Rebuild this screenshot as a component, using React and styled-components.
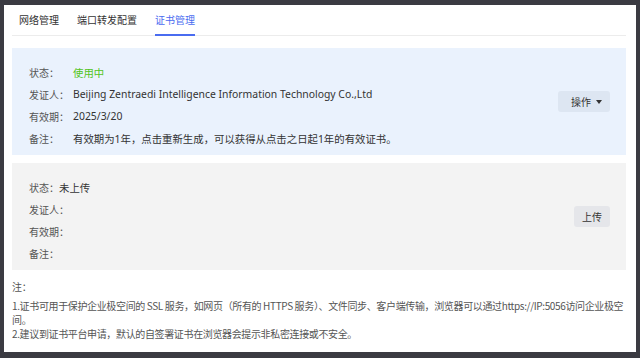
import React from 'react';
import styled, { createGlobalStyle } from 'styled-components';

const GlobalStyle = createGlobalStyle`
  html, body {
    margin: 0;
    padding: 0;
    background: #3b3b42;
  }
  body {
    font-family: "Noto Sans", "Noto Sans CJK SC", sans-serif;
  }
`;

const tabs = ['网络管理', '端口转发配置', '证书管理'];

const certs = [
  {
    tone: 'blue',
    action: '操作',
    dropdown: true,
    inline: false,
    rows: [
      { label: '状态：', value: '使用中', ok: true },
      { label: '发证人：', value: 'Beijing Zentraedi Intelligence Information Technology Co.,Ltd' },
      { label: '有效期：', value: '2025/3/20' },
      { label: '备注：', value: '有效期为1年，点击重新生成，可以获得从点击之日起1年的有效证书。' },
    ],
  },
  {
    tone: 'gray',
    action: '上传',
    dropdown: false,
    inline: true,
    rows: [
      { label: '状态：', value: '未上传' },
      { label: '发证人：', value: '' },
      { label: '有效期：', value: '' },
      { label: '备注：', value: '' },
    ],
  },
];

function Caret() {
  return (
    <svg width="6" height="4" viewBox="0 0 6 4">
      <path d="M0 0 L6 0 L3 4 Z" fill="#333" />
    </svg>
  );
}

export default function App() {
  return (
    <>
      <GlobalStyle />
      <Frame>
        <Dialog>
          <TabBar>
            {tabs.map((t, i) => (
              <Tab key={t} $active={i === 2}>
                {t}
              </Tab>
            ))}
          </TabBar>
          <Body>
            {certs.map((c, i) => (
              <Card key={i} $tone={c.tone}>
                <Rows>
                  {c.rows.map(r => (
                    <Row key={r.label}>
                      <Label $inline={c.inline}>{r.label}</Label>
                      <Value $ok={r.ok}>{r.value}</Value>
                    </Row>
                  ))}
                </Rows>
                <ActionButton $tone={c.tone}>
                  {c.action}
                  {c.dropdown && <Caret />}
                </ActionButton>
              </Card>
            ))}
            <Notes>
              <NoteTitle>注：</NoteTitle>
              <p>
                1.证书可用于保护企业极空间的 SSL 服务，如网页（所有的 HTTPS 服务）、文件同步、客户端传输，浏览器可以通过https://IP:5056访问企业极空间。
              </p>
              <p>2.建议到证书平台申请，默认的自签署证书在浏览器会提示非私密连接或不安全。</p>
            </Notes>
          </Body>
        </Dialog>
      </Frame>
    </>
  );
}

const Frame = styled.div`
  width: 640px;
  height: 358px;
  box-sizing: border-box;
  padding: 5px 4px 6px 4px;
  background: #3b3b42;
`;

const Dialog = styled.div`
  height: 100%;
  background: #fff;
  box-sizing: border-box;
  padding: 0 10px 0 8px;
  display: flex;
  flex-direction: column;
`;

const TabBar = styled.div`
  display: flex;
  gap: 18px;
  padding-left: 7px;
  height: 30px;
  border-bottom: 1px solid #ececec;
`;

const Tab = styled.div`
  font-size: 10px;
  line-height: 30px;
  color: ${p => (p.$active ? '#4a6cf0' : '#333')};
  border-bottom: 2px solid ${p => (p.$active ? '#4a6cf0' : 'transparent')};
  margin-bottom: -1px;
  font-family: "Noto Sans CJK SC", sans-serif;
`;

const Body = styled.div`
  padding-top: 12px;
  display: flex;
  flex-direction: column;
  gap: 8px;
`;

const Card = styled.div`
  display: flex;
  align-items: center;
  justify-content: space-between;
  background: ${p => (p.$tone === 'blue' ? '#eaf2fd' : '#f3f3f3')};
  height: 107px;
  box-sizing: border-box;
  padding: 0 16px 0 17px;
`;

const Rows = styled.div`
  display: flex;
  flex-direction: column;
  align-self: flex-start;
  padding-top: 13px;
`;

const Row = styled.div`
  display: flex;
  height: 22px;
  align-items: center;
  white-space: nowrap;
`;

const Label = styled.span`
  width: ${p => (p.$inline ? 'auto' : '44px')};
  flex-shrink: 0;
  font-size: 10px;
  font-family: "Noto Sans CJK SC", sans-serif;
  color: #555;
`;

const Value = styled.span`
  color: ${p => (p.$ok ? '#52c41a' : '#333')};
  font-family: "Noto Sans", "Noto Sans CJK SC", sans-serif;
  font-size: 10.4px;
`;

const ActionButton = styled.button`
  display: flex;
  align-items: center;
  gap: 5px;
  height: 21px;
  padding: 0 ${p => (p.$tone === 'blue' ? '8px 0 13px' : '8px')};
  border: none;
  border-radius: 3px;
  background: ${p => (p.$tone === 'blue' ? '#dde6f2' : '#e5e6ea')};
  font-size: 10px;
  color: #333;
  font-family: "Noto Sans CJK SC", sans-serif;
`;

const Notes = styled.div`
  padding-top: 2px;
  font-size: 10px;
  line-height: 14px;
  letter-spacing: -0.36px;
  color: #555;
  font-family: "Noto Sans CJK SC", sans-serif;
  p {
    margin: 0;
  }
`;

const NoteTitle = styled.p`
  margin-bottom: 5px !important;
`;
